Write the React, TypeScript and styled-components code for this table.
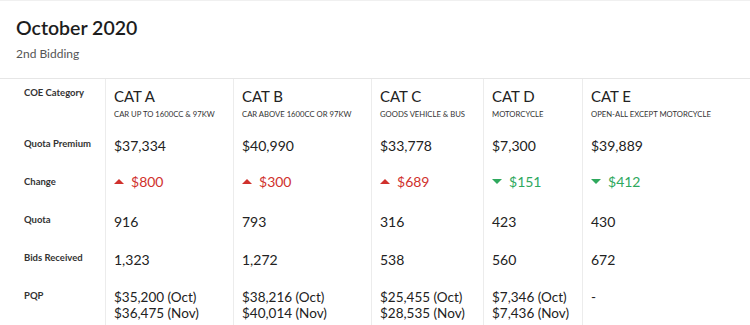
import styled, { createGlobalStyle } from 'styled-components'

const GlobalStyle = createGlobalStyle`
  body {
    margin: 0;
    background: #ffffff;
    font-family: Lato, "Open Sans", sans-serif;
    color: #222;
  }
`

type Cat = {
  name: string
  desc: string
  premium: string
  change: number
  quota: string
  bids: string
  pqp: string[]
}

const cats: Cat[] = [
  {
    name: 'CAT A',
    desc: 'Car up to 1600cc & 97kW',
    premium: '$37,334',
    change: 800,
    quota: '916',
    bids: '1,323',
    pqp: ['$35,200 (Oct)', '$36,475 (Nov)'],
  },
  {
    name: 'CAT B',
    desc: 'Car above 1600cc or 97kW',
    premium: '$40,990',
    change: 300,
    quota: '793',
    bids: '1,272',
    pqp: ['$38,216 (Oct)', '$40,014 (Nov)'],
  },
  {
    name: 'CAT C',
    desc: 'Goods vehicle & bus',
    premium: '$33,778',
    change: 689,
    quota: '316',
    bids: '538',
    pqp: ['$25,455 (Oct)', '$28,535 (Nov)'],
  },
  {
    name: 'CAT D',
    desc: 'Motorcycle',
    premium: '$7,300',
    change: -151,
    quota: '423',
    bids: '560',
    pqp: ['$7,346 (Oct)', '$7,436 (Nov)'],
  },
  {
    name: 'CAT E',
    desc: 'Open-all except motorcycle',
    premium: '$39,889',
    change: -412,
    quota: '430',
    bids: '672',
    pqp: ['-'],
  },
]

export default function App() {
  return (
    <Page>
      <GlobalStyle />
      <Header>
        <h1>October 2020</h1>
        <p>2nd Bidding</p>
      </Header>

      <Table>
        <Label>COE Category</Label>
        {cats.map((c) => (
          <HeadCell key={c.name}>
            <h3>{c.name}</h3>
            <span>{c.desc}</span>
          </HeadCell>
        ))}

        <Label>Quota Premium</Label>
        {cats.map((c) => (
          <Cell key={c.name}>{c.premium}</Cell>
        ))}

        <Label>Change</Label>
        {cats.map((c) => (
          <Cell key={c.name}>
            <Change $up={c.change > 0}>
              <Arrow $up={c.change > 0} />${Math.abs(c.change)}
            </Change>
          </Cell>
        ))}

        <Label>Quota</Label>
        {cats.map((c) => (
          <Cell key={c.name}>{c.quota}</Cell>
        ))}

        <Label>Bids Received</Label>
        {cats.map((c) => (
          <Cell key={c.name}>{c.bids}</Cell>
        ))}

        <Label $last>PQP</Label>
        {cats.map((c) => (
          <Cell key={c.name} $last>
            {c.pqp.map((p) => (
              <PqpLine key={p}>{p}</PqpLine>
            ))}
          </Cell>
        ))}
      </Table>
    </Page>
  )
}

const Page = styled.div`
  width: 750px;
  height: 325px;
  overflow: hidden;
  border-top: 1px solid #f0f0f0;
  box-sizing: border-box;
`

const Header = styled.div`
  padding: 15px 16px 0;
  height: 77px;
  box-sizing: border-box;

  h1 {
    margin: 0;
    font-size: 19.5px;
    line-height: 24px;
    font-weight: 600;
    color: #1d1d1d;
  }

  p {
    margin: 7px 0 0;
    font-size: 12px;
    line-height: 14px;
    color: #555;
  }
`

const Table = styled.div`
  display: grid;
  grid-template-columns: 105px 128px 138px 112px 99px 1fr;
  grid-template-rows: 51px 38px 38px 38px 38px auto;
  border-top: 1px solid #e6e6e6;
`

const Label = styled.div<{ $last?: boolean }>`
  padding: 8px 0 0 24px;
  font-size: 9.5px;
  line-height: 12px;
  font-weight: 700;
  color: #333;
  height: ${(p) => (p.$last ? '60px' : 'auto')};
`

const Cell = styled.div<{ $last?: boolean }>`
  border-left: 1px solid #ececec;
  padding: 8px 0 0 8px;
  font-size: 14px;
  line-height: 16px;
  color: #222;
  height: ${(p) => (p.$last ? '60px' : 'auto')};
`

const HeadCell = styled(Cell)`
  padding-top: 8px;

  h3 {
    margin: 0;
    font-size: 15px;
    line-height: 18px;
    font-weight: 400;
    color: #222;
  }

  span {
    display: block;
    margin-top: 4px;
    font-size: 7.7px;
    line-height: 10px;
    text-transform: uppercase;
    color: #333;
  }
`

const Change = styled.div<{ $up: boolean }>`
  display: flex;
  align-items: center;
  gap: 7px;
  height: 16px;
  margin-top: -2px;
  color: ${(p) => (p.$up ? '#d0312d' : '#2ea85d')};
`

const Arrow = styled.i<{ $up: boolean }>`
  width: 0;
  height: 0;
  margin-top: -1px;
  border-left: 5px solid transparent;
  border-right: 5px solid transparent;
  ${(p) =>
    p.$up
      ? 'border-bottom: 5px solid #d0312d;'
      : 'border-top: 5px solid #2ea85d;'}
`

const PqpLine = styled.div`
  font-size: 13.5px;
  line-height: 15.5px;
`
